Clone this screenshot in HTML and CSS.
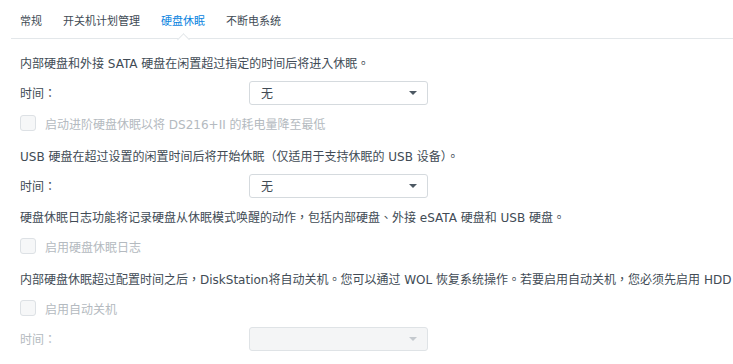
FILE: index.html
```html
<!DOCTYPE html>
<html lang="zh-TW">
<head>
    <meta charset="UTF-8">
    <title>硬盘休眠</title>
    <link rel="stylesheet" href="styles.css">
</head>
<body>
    <div class="tabs">
        <div class="tab">常规</div>
        <div class="tab">开关机计划管理</div>
        <div class="tab active">硬盘休眠</div>
        <div class="tab">不断电系统</div>
    </div>

    <div class="content">
        <div class="section gap">
            <div class="row">内部硬盘和外接 SATA 硬盘在闲置超过指定的时间后将进入休眠。</div>
            <div class="row field">
                <span class="label">时间：</span>
                <div class="select"><span>无</span><i class="arrow"></i></div>
            </div>
            <div class="row check disabled">
                <span class="box"></span>
                <span>启动进阶硬盘休眠以将 DS216+II 的耗电量降至最低</span>
            </div>
        </div>

        <div class="section">
            <div class="row">USB 硬盘在超过设置的闲置时间后将开始休眠（仅适用于支持休眠的 USB 设备）。</div>
            <div class="row field">
                <span class="label">时间：</span>
                <div class="select"><span>无</span><i class="arrow"></i></div>
            </div>
        </div>

        <div class="section gap">
            <div class="row">硬盘休眠日志功能将记录硬盘从休眠模式唤醒的动作，包括内部硬盘、外接 eSATA 硬盘和 USB 硬盘。</div>
            <div class="row check disabled">
                <span class="box"></span>
                <span>启用硬盘休眠日志</span>
            </div>
        </div>

        <div class="section">
            <div class="row">内部硬盘休眠超过配置时间之后，DiskStation将自动关机。您可以通过 WOL 恢复系统操作。若要启用自动关机，您必须先启用 HDD 休眠。</div>
            <div class="row check disabled">
                <span class="box"></span>
                <span>启用自动关机</span>
            </div>
            <div class="row field disabled">
                <span class="label">时间：</span>
                <div class="select off"><span></span><i class="arrow"></i></div>
            </div>
        </div>
    </div>
</body>
</html>
```

FILE: styles.css
```css
:root {
    --text-color: #414b55;
    --muted-color: #b4bac0;
    --blue: #0a84e0;
    --line-color: #e3e7ea;
    --field-border: #d5dade;
}

* {
    margin: 0;
    padding: 0;
    box-sizing: border-box;
}

body {
    font-family: "DejaVu Sans", "Noto Sans CJK TC", sans-serif;
    font-size: 12px;
    color: var(--text-color);
    background: #fff;
    overflow: hidden;
}

/* 顶部标签栏 */
.tabs {
    display: flex;
    align-items: center;
    height: 39px;
    margin-left: 11px;
    padding: 2px 0 0 9px;
    border-bottom: 1px solid var(--line-color);
}

.tab {
    position: relative;
    font-size: 11px;
    margin-right: 21px;
    white-space: nowrap;
}

.tab.active {
    color: var(--blue);
}

/* 选中标签下的小三角 */
.tab.active::after {
    content: "";
    position: absolute;
    left: 50%;
    bottom: -16px;
    width: 8px;
    height: 8px;
    margin-left: -4px;
    background: #fff;
    border-top: 1px solid var(--line-color);
    border-left: 1px solid var(--line-color);
    transform: rotate(45deg);
}

.content {
    padding: 8px 0 0 20px;
    white-space: nowrap;
}

.section.gap {
    margin-bottom: 2px;
}

.row {
    display: flex;
    align-items: center;
    height: 30px;
}

.row.field {
    height: 31px;
}

.label {
    width: 229px;
}

.select {
    display: flex;
    align-items: center;
    justify-content: space-between;
    width: 179px;
    height: 24px;
    padding: 0 10px 0 11px;
    border: 1px solid var(--field-border);
    border-radius: 3px;
    background: #fff;
}

.select.off {
    background: #f4f5f6;
    border-color: #dfe3e6;
}

.arrow {
    width: 0;
    height: 0;
    border-left: 4px solid transparent;
    border-right: 4px solid transparent;
    border-top: 4px solid #4d5863;
}

.select.off .arrow {
    border-top-color: #c4c9ce;
}

.check .box {
    width: 16px;
    height: 16px;
    margin-right: 9px;
    border: 1px solid #dde1e5;
    border-radius: 3px;
    background: #f6f7f8;
}

.disabled {
    color: var(--muted-color);
}
```
